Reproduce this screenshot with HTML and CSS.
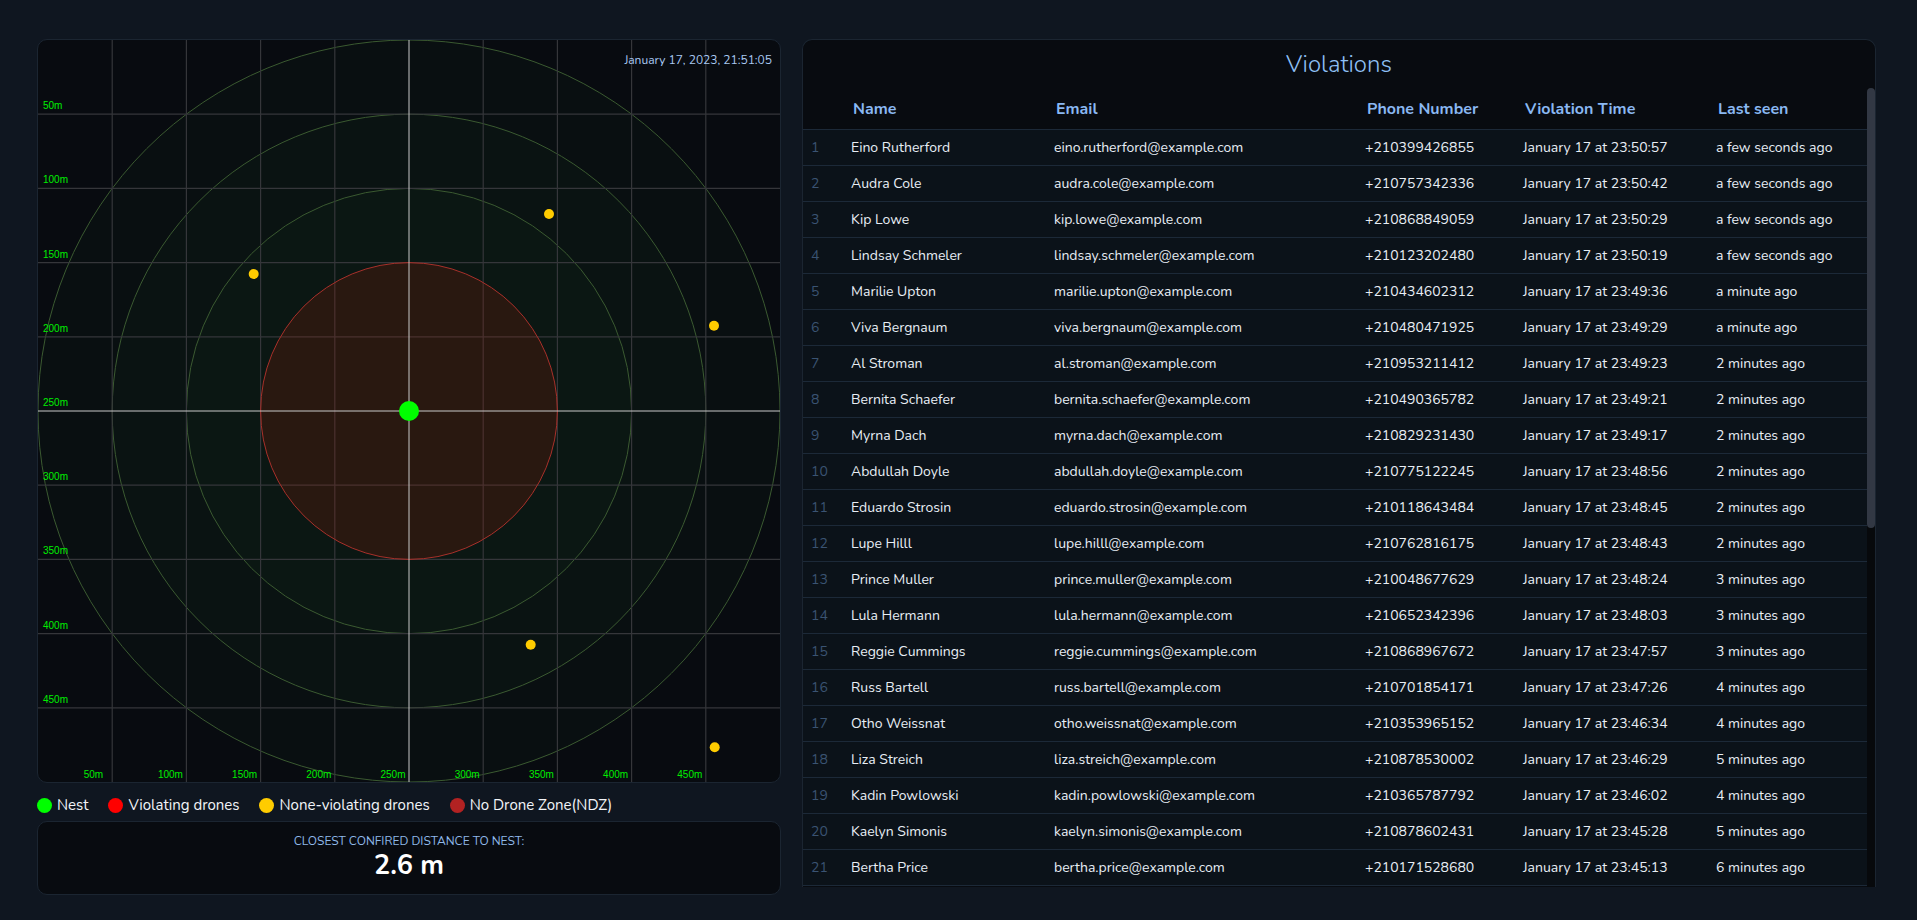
FILE: index.html
```html
<!DOCTYPE html>
<html lang="en">
<head>
<meta charset="utf-8">
<title>Drone Monitor</title>
<link rel="stylesheet" href="styles.css">
</head>
<body>
<div class="page">
  <div class="left">
    <div class="radar">
      <svg class="radar-svg" width="742" height="742" viewBox="0 0 742 742">
        <circle cx="371" cy="371" r="371" class="ring"/>
        <circle cx="371" cy="371" r="296.8" class="ring"/>
        <circle cx="371" cy="371" r="222.6" class="ring"/>
        <g class="grid">
          <line x1="74.2" y1="0" x2="74.2" y2="742"/>
          <line x1="148.4" y1="0" x2="148.4" y2="742"/>
          <line x1="222.6" y1="0" x2="222.6" y2="742"/>
          <line x1="296.8" y1="0" x2="296.8" y2="742"/>
          <line x1="445.2" y1="0" x2="445.2" y2="742"/>
          <line x1="519.4" y1="0" x2="519.4" y2="742"/>
          <line x1="593.6" y1="0" x2="593.6" y2="742"/>
          <line x1="667.8" y1="0" x2="667.8" y2="742"/>
          <line x1="0" y1="74.2" x2="742" y2="74.2"/>
          <line x1="0" y1="148.4" x2="742" y2="148.4"/>
          <line x1="0" y1="222.6" x2="742" y2="222.6"/>
          <line x1="0" y1="296.8" x2="742" y2="296.8"/>
          <line x1="0" y1="445.2" x2="742" y2="445.2"/>
          <line x1="0" y1="519.4" x2="742" y2="519.4"/>
          <line x1="0" y1="593.6" x2="742" y2="593.6"/>
          <line x1="0" y1="667.8" x2="742" y2="667.8"/>
        </g>
        <circle cx="371" cy="371" r="148.4" class="ndz"/>
        <g class="axis">
          <line x1="371" y1="0" x2="371" y2="742"/>
          <line x1="0" y1="371" x2="742" y2="371"/>
        </g>
        <g class="labels">
          <text x="5" y="69.2">50m</text>
          <text x="5" y="143.4">100m</text>
          <text x="5" y="217.6">150m</text>
          <text x="5" y="291.8">200m</text>
          <text x="5" y="366">250m</text>
          <text x="5" y="440.2">300m</text>
          <text x="5" y="514.4">350m</text>
          <text x="5" y="588.6">400m</text>
          <text x="5" y="662.8">450m</text>
          <text x="45.7" y="738">50m</text>
          <text x="119.9" y="738">100m</text>
          <text x="194.1" y="738">150m</text>
          <text x="268.3" y="738">200m</text>
          <text x="342.5" y="738">250m</text>
          <text x="416.7" y="738">300m</text>
          <text x="490.9" y="738">350m</text>
          <text x="565.1" y="738">400m</text>
          <text x="639.3" y="738">450m</text>
        </g>
        <g class="drones">
          <circle cx="511" cy="174" r="5"/>
          <circle cx="215.7" cy="234" r="5"/>
          <circle cx="676" cy="285.7" r="5"/>
          <circle cx="492.7" cy="604.7" r="5"/>
          <circle cx="676.7" cy="707.3" r="5"/>
        </g>
        <circle cx="371" cy="371" r="10" class="nest"/>
      </svg>
      <div class="stamp">January 17, 2023, 21:51:05</div>
    </div>
    <div class="legend">
      <div class="legend-item"><span class="dot dot-nest"></span>Nest</div>
      <div class="legend-item"><span class="dot dot-violating"></span>Violating drones</div>
      <div class="legend-item"><span class="dot dot-safe"></span>None-violating drones</div>
      <div class="legend-item"><span class="dot dot-ndz"></span>No Drone Zone(NDZ)</div>
    </div>
    <div class="closest">
      <div class="closest-label">CLOSEST CONFIRED DISTANCE TO NEST:</div>
      <div class="closest-value">2.6 m</div>
    </div>
  </div>

  <div class="violations">
    <div class="title">Violations</div>
    <div class="list">
      <div class="table">
        <div class="row head">
          <div class="cell"></div>
          <div class="cell">Name</div>
          <div class="cell">Email</div>
          <div class="cell">Phone Number</div>
          <div class="cell">Violation Time</div>
          <div class="cell">Last seen</div>
        </div>
        <div class="row"><div class="cell idx">1</div><div class="cell">Eino Rutherford</div><div class="cell">eino.rutherford@example.com</div><div class="cell">+210399426855</div><div class="cell">January 17 at 23:50:57</div><div class="cell">a few seconds ago</div></div>
        <div class="row"><div class="cell idx">2</div><div class="cell">Audra Cole</div><div class="cell">audra.cole@example.com</div><div class="cell">+210757342336</div><div class="cell">January 17 at 23:50:42</div><div class="cell">a few seconds ago</div></div>
        <div class="row"><div class="cell idx">3</div><div class="cell">Kip Lowe</div><div class="cell">kip.lowe@example.com</div><div class="cell">+210868849059</div><div class="cell">January 17 at 23:50:29</div><div class="cell">a few seconds ago</div></div>
        <div class="row"><div class="cell idx">4</div><div class="cell">Lindsay Schmeler</div><div class="cell">lindsay.schmeler@example.com</div><div class="cell">+210123202480</div><div class="cell">January 17 at 23:50:19</div><div class="cell">a few seconds ago</div></div>
        <div class="row"><div class="cell idx">5</div><div class="cell">Marilie Upton</div><div class="cell">marilie.upton@example.com</div><div class="cell">+210434602312</div><div class="cell">January 17 at 23:49:36</div><div class="cell">a minute ago</div></div>
        <div class="row"><div class="cell idx">6</div><div class="cell">Viva Bergnaum</div><div class="cell">viva.bergnaum@example.com</div><div class="cell">+210480471925</div><div class="cell">January 17 at 23:49:29</div><div class="cell">a minute ago</div></div>
        <div class="row"><div class="cell idx">7</div><div class="cell">Al Stroman</div><div class="cell">al.stroman@example.com</div><div class="cell">+210953211412</div><div class="cell">January 17 at 23:49:23</div><div class="cell">2 minutes ago</div></div>
        <div class="row"><div class="cell idx">8</div><div class="cell">Bernita Schaefer</div><div class="cell">bernita.schaefer@example.com</div><div class="cell">+210490365782</div><div class="cell">January 17 at 23:49:21</div><div class="cell">2 minutes ago</div></div>
        <div class="row"><div class="cell idx">9</div><div class="cell">Myrna Dach</div><div class="cell">myrna.dach@example.com</div><div class="cell">+210829231430</div><div class="cell">January 17 at 23:49:17</div><div class="cell">2 minutes ago</div></div>
        <div class="row"><div class="cell idx">10</div><div class="cell">Abdullah Doyle</div><div class="cell">abdullah.doyle@example.com</div><div class="cell">+210775122245</div><div class="cell">January 17 at 23:48:56</div><div class="cell">2 minutes ago</div></div>
        <div class="row"><div class="cell idx">11</div><div class="cell">Eduardo Strosin</div><div class="cell">eduardo.strosin@example.com</div><div class="cell">+210118643484</div><div class="cell">January 17 at 23:48:45</div><div class="cell">2 minutes ago</div></div>
        <div class="row"><div class="cell idx">12</div><div class="cell">Lupe Hilll</div><div class="cell">lupe.hilll@example.com</div><div class="cell">+210762816175</div><div class="cell">January 17 at 23:48:43</div><div class="cell">2 minutes ago</div></div>
        <div class="row"><div class="cell idx">13</div><div class="cell">Prince Muller</div><div class="cell">prince.muller@example.com</div><div class="cell">+210048677629</div><div class="cell">January 17 at 23:48:24</div><div class="cell">3 minutes ago</div></div>
        <div class="row"><div class="cell idx">14</div><div class="cell">Lula Hermann</div><div class="cell">lula.hermann@example.com</div><div class="cell">+210652342396</div><div class="cell">January 17 at 23:48:03</div><div class="cell">3 minutes ago</div></div>
        <div class="row"><div class="cell idx">15</div><div class="cell">Reggie Cummings</div><div class="cell">reggie.cummings@example.com</div><div class="cell">+210868967672</div><div class="cell">January 17 at 23:47:57</div><div class="cell">3 minutes ago</div></div>
        <div class="row"><div class="cell idx">16</div><div class="cell">Russ Bartell</div><div class="cell">russ.bartell@example.com</div><div class="cell">+210701854171</div><div class="cell">January 17 at 23:47:26</div><div class="cell">4 minutes ago</div></div>
        <div class="row"><div class="cell idx">17</div><div class="cell">Otho Weissnat</div><div class="cell">otho.weissnat@example.com</div><div class="cell">+210353965152</div><div class="cell">January 17 at 23:46:34</div><div class="cell">4 minutes ago</div></div>
        <div class="row"><div class="cell idx">18</div><div class="cell">Liza Streich</div><div class="cell">liza.streich@example.com</div><div class="cell">+210878530002</div><div class="cell">January 17 at 23:46:29</div><div class="cell">5 minutes ago</div></div>
        <div class="row"><div class="cell idx">19</div><div class="cell">Kadin Powlowski</div><div class="cell">kadin.powlowski@example.com</div><div class="cell">+210365787792</div><div class="cell">January 17 at 23:46:02</div><div class="cell">4 minutes ago</div></div>
        <div class="row"><div class="cell idx">20</div><div class="cell">Kaelyn Simonis</div><div class="cell">kaelyn.simonis@example.com</div><div class="cell">+210878602431</div><div class="cell">January 17 at 23:45:28</div><div class="cell">5 minutes ago</div></div>
        <div class="row"><div class="cell idx">21</div><div class="cell">Bertha Price</div><div class="cell">bertha.price@example.com</div><div class="cell">+210171528680</div><div class="cell">January 17 at 23:45:13</div><div class="cell">6 minutes ago</div></div>
      </div>
      <div class="scrollbar"><div class="thumb"></div></div>
    </div>
  </div>
</div>
</body>
</html>
```

FILE: styles.css
```css
html, body {
  margin: 0;
  padding: 0;
}

body {
  background: #0f1620;
  color: #e8eef5;
  font-family: "Nunito", "Lato", "Noto Sans", sans-serif;
  overflow: hidden;
}

.page {
  display: flex;
  gap: 21px;
  padding: 39px 41px 0 37px;
  height: 920px;
  box-sizing: border-box;
}

/* ---------- left column ---------- */
.left {
  width: 744px;
  flex: none;
  display: flex;
  flex-direction: column;
}

.radar {
  position: relative;
  width: 744px;
  height: 744px;
  box-sizing: border-box;
  border: 1px solid #1b2531;
  border-radius: 10px;
  background: #080b10;
  overflow: hidden;
}

.radar-svg {
  display: block;
}

.ring {
  fill: rgba(70, 140, 70, 0.035);
  stroke: #3b5a31;
  stroke-width: 1;
}

.ndz {
  fill: rgba(150, 30, 10, 0.22);
  stroke: #a8302a;
  stroke-width: 1;
}

.grid line {
  stroke: #35363a;
  stroke-width: 1.2;
}

.axis line {
  stroke: #c9c9c9;
  stroke-width: 1;
}

.labels text {
  font-family: "Liberation Sans", Arial, sans-serif;
  font-size: 10px;
  fill: #00ee00;
}

.drones circle {
  fill: #ffcc00;
}

.nest {
  fill: #00ff00;
}

.stamp {
  position: absolute;
  top: 12px;
  right: 8px;
  font-size: 12px;
  line-height: 16px;
  color: #a9c9f2;
}

.legend {
  display: flex;
  align-items: center;
  gap: 20px;
  height: 24px;
  margin-top: 10px;
  font-size: 15px;
  color: #f2f4f8;
}

.legend-item {
  display: flex;
  align-items: center;
  gap: 5px;
}

.dot {
  width: 15px;
  height: 15px;
  border-radius: 50%;
  flex: none;
}

.dot-nest { background: #00ff00; }
.dot-violating { background: #ff0000; }
.dot-safe { background: #ffcc00; }
.dot-ndz { background: #b22222; }

.closest {
  margin-top: 4px;
  height: 74px;
  box-sizing: border-box;
  border: 1px solid #1b2531;
  border-radius: 10px;
  background: #080b10;
  display: flex;
  flex-direction: column;
  align-items: center;
  padding-top: 11px;
}

.closest-label {
  font-size: 12px;
  line-height: 16px;
  color: #8fb8e8;
}

.closest-value {
  font-size: 27px;
  line-height: 34px;
  font-weight: 700;
  color: #ffffff;
}

/* ---------- violations ---------- */
.violations {
  flex: 1;
  height: 848px;
  box-sizing: border-box;
  border: 1px solid #1b2531;
  border-bottom: none;
  border-radius: 10px 10px 0 0;
  background: #080b10;
  display: flex;
  flex-direction: column;
  overflow: hidden;
}

.title {
  height: 48px;
  flex: none;
  line-height: 48px;
  text-align: center;
  font-size: 24px;
  font-weight: 300;
  color: #8fc0f5;
}

.list {
  flex: 1;
  display: flex;
  min-height: 0;
}

.table {
  flex: 1;
  min-width: 0;
}

.scrollbar {
  width: 8px;
  flex: none;
  background: #07090c;
}

.thumb {
  height: 440px;
  background: #323844;
  border-radius: 4px;
}

.row {
  display: grid;
  grid-template-columns: 40px 203px 311px 158px 193px 1fr;
  align-items: center;
  height: 36px;
  box-sizing: border-box;
  border-bottom: 1px solid #1c2938;
  background: #0b1219;
  font-size: 14px;
  white-space: nowrap;
}

.row .cell {
  padding-left: 8px;
  overflow: hidden;
}

.row.head {
  height: 42px;
  background: #080b10;
  font-size: 16px;
  font-weight: 700;
  color: #8ab8f2;
}

.row.head .cell {
  padding-left: 10px;
}

.idx {
  color: #3a5372;
}
```
